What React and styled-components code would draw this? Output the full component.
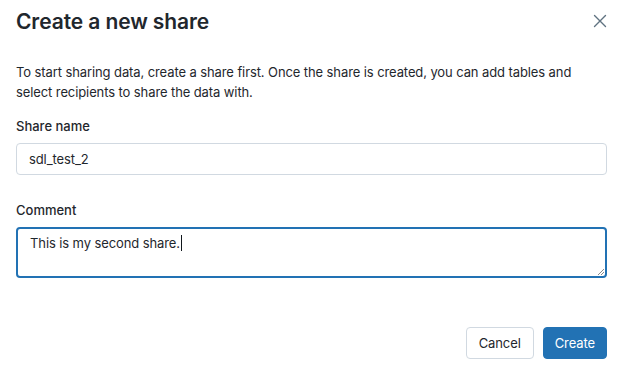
import styled, { createGlobalStyle } from "styled-components";

const GlobalStyle = createGlobalStyle`
  html, body {
    margin: 0;
    padding: 0;
    background: #ffffff;
  }
  body {
    font-family: Inter, "Noto Sans", "Liberation Sans", sans-serif;
    color: #11171c;
    -webkit-font-smoothing: antialiased;
  }
`;

const Modal = styled.div`
  width: 625px;
  height: 365px;
  box-sizing: border-box;
  padding: 8px 18px 0 16px;
  display: flex;
  flex-direction: column;
`;

const Header = styled.div`
  display: flex;
  align-items: center;
  justify-content: space-between;
  height: 28px;
`;

const Title = styled.h2`
  margin: 0;
  font-size: 21px;
  line-height: 28px;
  font-weight: 600;
  color: #1f272d;
  letter-spacing: -0.1px;
`;

const CloseButton = styled.button`
  border: 0;
  background: none;
  padding: 0;
  width: 16px;
  height: 16px;
  margin-right: -1px;
  margin-top: -2px;
  display: flex;
  align-items: center;
  justify-content: center;
  color: #5f7281;
  cursor: pointer;
`;

const Description = styled.p`
  margin: 26px 0 0;
  font-size: 13px;
  line-height: 20px;
  letter-spacing: -0.1px;
  color: #1f272d;
`;

const Label = styled.label`
  display: block;
  margin-top: ${({ $gap }) => $gap}px;
  font-size: 13px;
  line-height: 20px;
  font-weight: 500;
  color: #1f272d;
`;

const TextInput = styled.div`
  margin-top: 7px;
  height: 32px;
  box-sizing: border-box;
  border: 1px solid #d1d9e1;
  border-radius: 4px;
  padding: 0 12px;
  display: flex;
  align-items: center;
  font-size: 13px;
  letter-spacing: -0.1px;
  color: #1f272d;
`;

const TextArea = styled.div`
  position: relative;
  margin-top: 7px;
  height: 51px;
  box-sizing: border-box;
  border: 2px solid #2272b4;
  border-radius: 4px;
  padding: 4px 12px;
  font-size: 13px;
  line-height: 20px;
  letter-spacing: -0.1px;
  color: #1f272d;
`;

const Caret = styled.span`
  display: inline-block;
  width: 1px;
  height: 16px;
  margin-left: 1px;
  vertical-align: -3px;
  background: #11171c;
`;

const Grip = styled.svg`
  position: absolute;
  right: 0;
  bottom: 0;
`;

const Footer = styled.div`
  margin-top: 49px;
  display: flex;
  justify-content: flex-end;
  gap: 9px;
`;

const Button = styled.button`
  height: 32px;
  box-sizing: border-box;
  padding: 0 ${({ $primary }) => ($primary ? "11px" : "12px")};
  border-radius: 4px;
  font-family: inherit;
  font-size: 13px;
  letter-spacing: -0.1px;
  cursor: pointer;
  border: 1px solid ${({ $primary }) => ($primary ? "#2272b4" : "#d1d9e1")};
  background: ${({ $primary }) => ($primary ? "#2272b4" : "#ffffff")};
  color: ${({ $primary }) => ($primary ? "#ffffff" : "#1f272d")};
`;

export default function App() {
  return (
    <>
      <GlobalStyle />
      <Modal>
        <Header>
          <Title>Create a new share</Title>
          <CloseButton aria-label="Close">
            <svg width="14" height="14" viewBox="0 0 14 14" fill="none">
              <path
                d="M1.5 1.5l11 11M12.5 1.5l-11 11"
                stroke="currentColor"
                strokeWidth="1.4"
                strokeLinecap="round"
              />
            </svg>
          </CloseButton>
        </Header>
        <Description>
          To start sharing data, create a share first. Once the share is created, you can add tables and
          <br />
          select recipients to share the data with.
        </Description>
        <Label $gap={14}>Share name</Label>
        <TextInput>sdl_test_2</TextInput>
        <Label $gap={25}>Comment</Label>
        <TextArea>
          This is my second share.
          <Caret />
          <Grip width="9" height="9" viewBox="0 0 9 9">
            <path d="M8 2L2 8M8 5L5 8" stroke="#8a8a8a" strokeWidth="1" />
          </Grip>
        </TextArea>
        <Footer>
          <Button>Cancel</Button>
          <Button $primary>Create</Button>
        </Footer>
      </Modal>
    </>
  );
}
